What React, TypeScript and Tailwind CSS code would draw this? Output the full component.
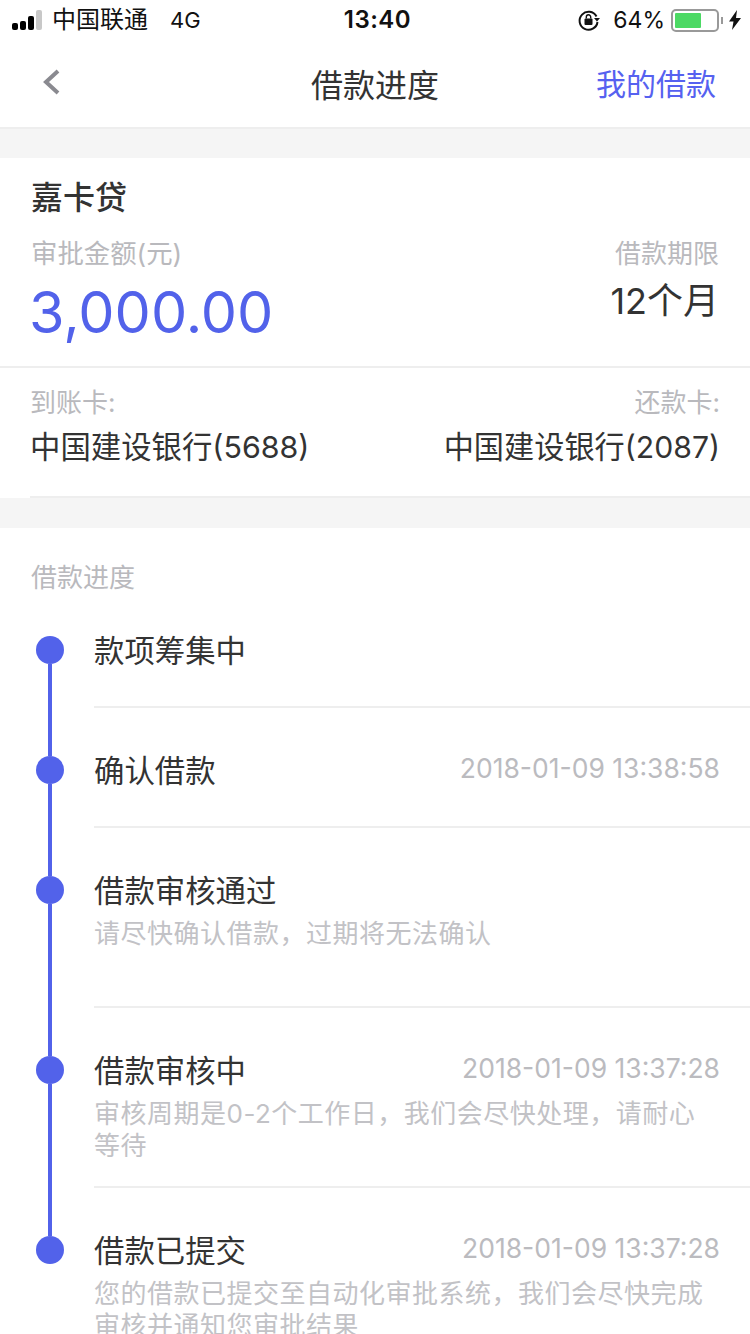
import React from "react";

const steps = [
  { title: "款项筹集中", time: "", note: [], height: "h-[120px]" },
  { title: "确认借款", time: "2018-01-09 13:38:58", note: [], height: "h-[120px]" },
  { title: "借款审核通过", time: "", note: ["请尽快确认借款，过期将无法确认"], height: "h-[180px]" },
  {
    title: "借款审核中",
    time: "2018-01-09 13:37:28",
    note: ["审核周期是0-2个工作日，我们会尽快处理，请耐心", "等待"],
    height: "h-[180px]",
  },
  {
    title: "借款已提交",
    time: "2018-01-09 13:37:28",
    note: ["您的借款已提交至自动化审批系统，我们会尽快完成", "审核并通知您审批结果"],
    height: "h-[180px]",
  },
];

function StatusBar() {
  return (
    <div className="flex h-[40px] items-center justify-between pl-[12px] pr-[9px] text-[#111]">
      <div className="flex w-[290px] items-center">
        <div className="flex items-end gap-[2px]">
          <span className="h-[7px] w-[6px] rounded-[2px] bg-black" />
          <span className="h-[9px] w-[6px] rounded-[2px] bg-black" />
          <span className="h-[14px] w-[6px] rounded-[2px] bg-black" />
          <span className="h-[20px] w-[6px] rounded-[2px] bg-[#c8c8c8]" />
        </div>
        <span className="ml-[10px] text-[24px]">中国联通</span>
        <span className="ml-[22px] text-[22px]">4G</span>
      </div>
      <span className="ml-[2px] text-[24px] font-semibold tracking-[0.5px]">13:40</span>
      <div className="flex w-[290px] items-center justify-end">
        <svg width="24" height="24" viewBox="0 0 24 24" fill="none">
          <path d="M19.5 8.5A9 9 0 1 0 20.5 14" stroke="#111" strokeWidth="2" />
          <path d="M17 10h6l-3 3.6z" fill="#111" />
          <rect x="7.5" y="10.5" width="8" height="6.5" rx="1" fill="#111" />
          <path d="M9.3 10.5V9a2.2 2.2 0 0 1 4.4 0v1.5" stroke="#111" strokeWidth="1.4" />
        </svg>
        <span className="ml-[12px] text-[23px]">64%</span>
        <div className="ml-[6px] flex h-[23px] w-[48px] items-center rounded-[5px] border-2 border-[#999] p-[2px]">
          <div className="h-full w-[26px] rounded-[1px] bg-[#4cd964]" />
        </div>
        <div className="ml-[2px] h-[7px] w-[2px] bg-[#999]" />
        <svg className="ml-[6px]" width="12" height="20" viewBox="0 0 12 20">
          <path d="M8 0 0 11.5h4.5L3 20l9-12H7z" fill="#111" />
        </svg>
      </div>
    </div>
  );
}

function NavBar() {
  return (
    <div className="relative flex h-[89px] items-center justify-center border-b-2 border-[#eeeeee] pt-[4px]">
      <svg className="absolute left-[42px] top-[29px]" width="19" height="26" viewBox="0 0 19 26" fill="none">
        <path d="M16 2 4 13l12 11" stroke="#8a8a90" strokeWidth="4" />
      </svg>
      <span className="text-[32px] leading-none text-[#333]">借款进度</span>
      <span className="absolute right-[34px] top-[29px] text-[30px] leading-none text-[#5661f0]">我的借款</span>
    </div>
  );
}

function LoanCard() {
  return (
    <div className="bg-white">
      <div className="flex h-[210px] justify-between border-b-2 border-[#eeeeee] pl-[31px] pr-[31px]">
        <div>
          <div className="mt-[24px] text-[32px] font-medium leading-none text-[#333]">嘉卡贷</div>
          <div className="mt-[26px] text-[26.4px] leading-none text-[#b9b9bd]">审批金额(元)</div>
          <div className="-ml-[2px] mt-[18px] text-[57.5px] leading-none text-[#5262ea]">3,000.00</div>
        </div>
        <div className="flex flex-col items-end">
          <div className="mt-[83px] text-[26px] leading-none text-[#b9b9bd]">借款期限</div>
          <div className="mt-[16px] text-[36px] leading-none text-[#333]">12个月</div>
        </div>
      </div>
      <div className="ml-[30px] flex h-[130px] justify-between border-b-2 border-[#eeeeee] pr-[30px]">
        <div>
          <div className="mt-[22px] text-[26px] leading-none text-[#b9b9bd]">到账卡:</div>
          <div className="mt-[16px] text-[30.4px] leading-none text-[#333]">中国建设银行(5688)</div>
        </div>
        <div className="flex flex-col items-end">
          <div className="mt-[22px] text-[26px] leading-none text-[#b9b9bd]">还款卡:</div>
          <div className="mt-[16px] text-[30.2px] leading-none text-[#333]">中国建设银行(2087)</div>
        </div>
      </div>
    </div>
  );
}

function Timeline() {
  return (
    <div className="bg-white">
      <div className="h-[60px] pl-[31px] pt-[37px] text-[26px] leading-none text-[#b9b9bd]">借款进度</div>
      {steps.map((step, i) => (
        <div key={step.title} className={`flex ${step.height}`}>
          <div className="ml-[36px] mr-[30px] flex w-[28px] flex-col items-center">
            <div className={`h-[48px] w-[4px] ${i === 0 ? "bg-transparent" : "bg-[#5262ea]"}`} />
            <div className="h-[28px] w-[28px] shrink-0 rounded-full bg-[#5262ea]" />
            {i < steps.length - 1 && <div className="w-[4px] flex-1 bg-[#5262ea]" />}
          </div>
          <div className="flex-1 border-b-2 border-[#eeeeee] pr-[30px] pt-[48px]">
            <div className="flex items-start justify-between">
              <span className="text-[30.4px] leading-[30px] text-[#333]">{step.title}</span>
              {step.time && <span className="text-[26.5px] leading-[24px] text-[#bbbbbf]">{step.time}</span>}
            </div>
            <div className="mt-[12px] text-[26px] leading-[32px] tracking-[0.5px] text-[#c2c2c6]">
              {step.note.map((line) => (
                <div key={line}>{line}</div>
              ))}
            </div>
          </div>
        </div>
      ))}
    </div>
  );
}

export default function App() {
  return (
    <div className="h-[1334px] w-[750px] overflow-hidden bg-[#f5f5f5] font-['Inter','Noto_Sans_CJK_SC',sans-serif]">
      <div className="bg-white">
        <StatusBar />
        <NavBar />
      </div>
      <div className="mt-[29px]">
        <LoanCard />
      </div>
      <div className="mt-[30px]">
        <Timeline />
      </div>
    </div>
  );
}
